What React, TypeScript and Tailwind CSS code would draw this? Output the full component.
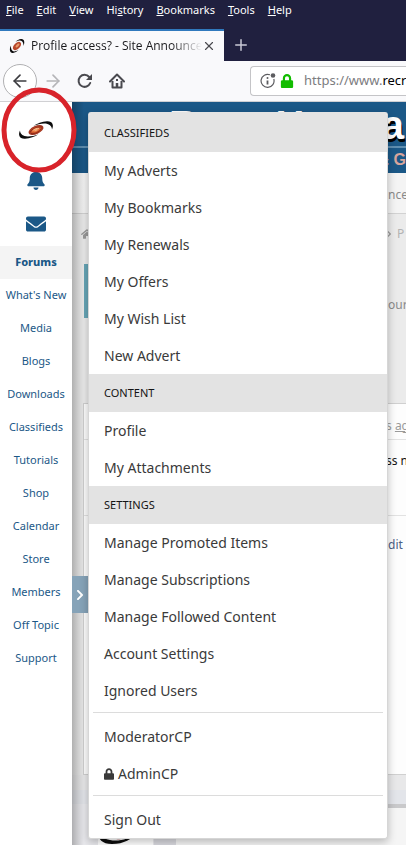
import * as React from "react"
import { ArrowLeft, ArrowRight, Plus, X } from "lucide-react"
import { FaBell, FaChevronRight, FaEnvelope, FaHome, FaLock } from "react-icons/fa"
import { clsx } from "clsx"

const browserMenus = [
  { pre: "", key: "F", post: "ile" },
  { pre: "", key: "E", post: "dit" },
  { pre: "", key: "V", post: "iew" },
  { pre: "Hi", key: "s", post: "tory" },
  { pre: "", key: "B", post: "ookmarks" },
  { pre: "", key: "T", post: "ools" },
  { pre: "", key: "H", post: "elp" },
]

const sideLinks = [
  "Forums", "What's New", "Media", "Blogs", "Downloads", "Classifieds", "Tutorials",
  "Shop", "Calendar", "Store", "Members", "Off Topic", "Support",
]

const menuSections = [
  {
    title: "CLASSIFIEDS",
    items: ["My Adverts", "My Bookmarks", "My Renewals", "My Offers", "My Wish List", "New Advert"],
  },
  { title: "CONTENT", items: ["Profile", "My Attachments"] },
  {
    title: "SETTINGS",
    items: [
      "Manage Promoted Items",
      "Manage Subscriptions",
      "Manage Followed Content",
      "Account Settings",
      "Ignored Users",
    ],
  },
]

function GalaxyLogo({ className }: { className?: string }) {
  return (
    <svg viewBox="0 0 36 20" className={className} aria-hidden="true">
      <defs>
        <radialGradient id="core">
          <stop offset="0" stopColor="#f9c48c" />
          <stop offset="0.4" stopColor="#e0662f" />
          <stop offset="1" stopColor="#96291a" />
        </radialGradient>
      </defs>
      <path d="M2 10.500C0 14.500 1 19 7 18.800C12 18.500 17 16.500 20.500 14.200C16 16 10 17.200 6.500 16C3 14.800 2 12.500 2 10.500Z" fill="#0c0c0c" />
      <path d="M34 9.500C36 5.500 35 1 29 1.200C24 1.500 19 3.500 15.500 5.800C20 4 26 2.800 29.500 4C33 5.200 34 7.500 34 9.500Z" fill="#0c0c0c" />
      <ellipse cx="18" cy="10" rx="8" ry="4" transform="rotate(-24 18 10)" fill="url(#core)" />
      <path d="M12 12.500C14 8.500 19 6.500 24 7M13 13.500C17 14 21 12 23.500 8.500" stroke="#7d2015" strokeWidth="0.7" fill="none" />
      <path d="M14.500 11C16 9 19 8 21 8.500" stroke="#ffd9a8" strokeWidth="0.7" fill="none" />
    </svg>
  )
}

// upright version used for the tab favicon
function Favicon() {
  return (
    <svg viewBox="0 0 16 16" className="h-4 w-4 shrink-0" aria-hidden="true">
      <path d="M2 7.500C0 11 .8 15.500 4 15C6 14.700 8 13.500 9.500 12C7 13.400 4.500 14 3.200 12.500C2 11.200 1.800 9 2 7.500Z" fill="#0c0c0c" />
      <path d="M14.500 8C16 4.500 15.500 .6 12 1C10 1.200 8 2.300 6.500 4C9 2.600 11.500 2 13 3.300C14.200 4.500 14.600 6.500 14.500 8Z" fill="#0c0c0c" />
      <ellipse cx="8" cy="8" rx="5" ry="3" transform="rotate(-45 8 8)" fill="#b8482b" />
      <ellipse cx="8.500" cy="7.500" rx="2.500" ry="1.200" transform="rotate(-45 8.500 7.500)" fill="#e89a6c" />
    </svg>
  )
}

function ReloadIcon() {
  return (
    <svg viewBox="0 0 16 16" className="h-4 w-4" fill="none" stroke="#4a4a4f" strokeWidth="2">
      <path d="M13.200 10A6 6 0 1 1 12.200 4" strokeLinecap="round" />
      <path d="M15 1V7H9Z" fill="#4a4a4f" stroke="none" />
    </svg>
  )
}

function HomeIcon() {
  return (
    <svg viewBox="0 0 16 16" className="h-4 w-4" fill="none" stroke="#4a4a4f" strokeWidth="2">
      <path d="M1 8.500L8 1.500L15 8.500" strokeLinecap="round" strokeLinejoin="round" />
      <path d="M3.500 8V14.500H12.500V8" strokeLinejoin="round" />
      <path d="M8 14.500V10" strokeWidth="2.500" />
      <path d="M8 6V8" />
    </svg>
  )
}

function InfoIcon() {
  return (
    <svg viewBox="0 0 16 16" className="h-4 w-4 shrink-0" fill="none" stroke="#5c5c60">
      <path d="M10 1.800A6.500 6.500 0 1 0 13.800 6" strokeWidth="1.200" />
      <circle cx="13" cy="2.500" r="2.300" fill="#5c5c60" stroke="none" />
      <path d="M7.500 7.500V11.500" strokeWidth="1.800" />
      <circle cx="7.500" cy="5" r="1" fill="#5c5c60" stroke="none" />
    </svg>
  )
}

function BrowserChrome() {
  return (
    <header className="shrink-0">
      <div className="flex h-[29px] gap-[13px] bg-[#20203f] px-[6px] text-[11px] leading-5 text-white">
        {browserMenus.map((m) => (
          <button key={m.key + m.post} className="h-5">
            {m.pre}
            <span className="underline">{m.key}</span>
            {m.post}
          </button>
        ))}
      </div>

      <div className="flex h-8 items-stretch bg-[#20203f]">
        <div className="flex w-[224px] items-center border-t-2 border-[#3079bd] bg-[#f9f9fb] pl-[9px] pr-[10px]">
          <Favicon />
          <span className="ml-[6px] flex-1 whitespace-nowrap font-['Open_Sans',sans-serif] text-[12px] text-[#18181b] [mask-image:linear-gradient(to_right,black_82%,transparent)]">
            Profile access? - Site Announce
          </span>
          <button aria-label="Close tab">
            <X className="h-[14px] w-[14px] text-[#4a4a4f]" />
          </button>
        </div>
        <button aria-label="New tab" className="ml-2">
          <Plus className="h-[18px] w-[18px] text-[#c9c9d6]" />
        </button>
      </div>

      <div className="flex h-[41px] items-center border-b border-[#d0d0d3] bg-[#f9f9fb] pl-[3px]">
        <button aria-label="Back" className="flex h-[34px] w-[34px] shrink-0 items-center justify-center rounded-full border border-[#b1b1b3] bg-white">
          <ArrowLeft className="h-5 w-5 text-[#3c3c40]" />
        </button>
        <button aria-label="Forward" className="ml-[6px]">
          <ArrowRight className="h-5 w-5 text-[#b5b5b8]" />
        </button>
        <button aria-label="Reload" className="ml-[14px]">
          <ReloadIcon />
        </button>
        <button aria-label="Home" className="ml-4">
          <HomeIcon />
        </button>
        <div className="ml-[125px] flex h-[30px] min-w-0 flex-1 items-center overflow-hidden rounded-l-sm border border-r-0 border-[#c4c4c7] bg-white pl-[9px]">
          <InfoIcon />
          <FaLock className="ml-1 h-[14px] w-[14px] shrink-0 text-[#12bc00]" />
          <label htmlFor="url" className="ml-[10px] text-[13px] text-[#7c7c80]">
            https://www.
          </label>
          <input id="url" defaultValue="recr" className="min-w-0 flex-1 bg-transparent text-[13px] text-black outline-none" />
        </div>
      </div>
    </header>
  )
}

function Sidebar() {
  return (
    <aside className="relative z-20 w-[72px] shrink-0 bg-white text-[#1b5887]">
      <a href="#home" aria-label="Home" className="flex h-14 items-center justify-center">
        <GalaxyLogo className="h-5 w-9" />
      </a>
      <a href="#alerts" aria-label="Alerts" className="flex h-[44px] items-center justify-center">
        <FaBell className="h-5 w-5" />
      </a>
      <a href="#inbox" aria-label="Inbox" className="flex h-11 items-center justify-center">
        <FaEnvelope className="h-5 w-5" />
      </a>
      <nav>
        {sideLinks.map((link, i) => (
          <a
            key={link}
            href="#"
            className={clsx(
              "flex h-[33px] items-center justify-center whitespace-nowrap text-[11px]",
              i === 0 && "bg-[#f4f4f4] font-extrabold"
            )}
          >
            {link}
          </a>
        ))}
      </nav>
      {/* hand-drawn marker around the account avatar */}
      <svg viewBox="0 0 78 88" className="absolute left-0 -top-4 h-[88px] w-[78px] max-w-none" fill="none">
        <ellipse cx="39" cy="44" rx="35" ry="40" stroke="#d8232a" strokeWidth="5" />
      </svg>
    </aside>
  )
}

function ForumPage() {
  return (
    <div className="flex h-full flex-col whitespace-nowrap text-[#8a8a8a]">
      <div className="h-[71px] shrink-0 bg-[#1b5887]">
        <div className="flex h-[46px] justify-between border-b-2 border-[#5f8eb0] pl-[97px] pr-[2px] font-['Liberation_Sans',sans-serif] text-[40px] leading-[46px] font-bold text-white [text-shadow:1px_3px_0_#000]">
          <span>R</span>
          <span>H</span>
          <span>a</span>
        </div>
        <div className="flex justify-end gap-1 font-['Liberation_Sans',sans-serif] text-[16px] leading-6 font-bold text-[#d8a59c]">
          <span className="italic">&amp;</span>
          <span>G</span>
        </div>
      </div>
      <div className="flex h-[41px] shrink-0 items-center border-b border-[#d2d2d2] bg-[#f4f4f4] pt-1 pl-[316px] text-[12px]">
        nce
      </div>
      <div className="flex h-10 shrink-0 items-center pl-[9px] text-[12px] text-[#b3b3b3]">
        <FaHome className="h-3 w-3 shrink-0 text-[#999]" />
        <FaChevronRight className="ml-[292px] h-2 w-2 shrink-0 text-[#999]" />
        <span className="ml-1">P</span>
      </div>
      <div className="mt-[10px] ml-3 flex h-[54px] shrink-0 items-end border-l-4 border-[#67a5b6] pb-1 pl-[300px] text-[12px] leading-[18px]">
        our
      </div>
      <div className="mt-[85px] ml-[11px] shrink-0 border-t border-b border-l border-[#d0d0d0] bg-[#fdfdfd] text-[12px]">
        <div className="flex h-9 items-center border-b border-[#e2e2e2] pt-2 pl-[302px] text-[#9a9a9a]">
          s&nbsp;<span className="underline">ag</span>
        </div>
        <div className="h-[76px] border-b border-[#e2e2e2] pt-3 pl-[302px] leading-[18px] text-[#141414]">
          ss n
        </div>
        <div className="h-[258px] pt-5 pl-[304px] leading-[18px] text-[#4c5f85]">dit</div>
      </div>
      <div className="h-[15px] shrink-0 bg-[#e8e8e9]" />
      <div className="h-[14px] shrink-0 bg-[#e3e5ea]" />
      <div className="flex min-h-0 flex-1 overflow-hidden bg-[#f5f5f5]">
        <div className="flex w-[104px] items-start border-r-[22px] border-[#d9d9df] bg-[#e9e9ed] pt-[21px]">
          {/* top of the poster's avatar */}
          <svg viewBox="0 0 55 20" className="ml-[26px] h-5 w-[55px] shrink-0 bg-white" aria-hidden="true">
            <path d="M0 8C0 14 4 19 14 19C26 19 34 14 39 8C32 14 20 17 12 15C6 14 3 11 3 6Z" fill="#0c0c0c" />
            <ellipse cx="22" cy="9" rx="9" ry="5" transform="rotate(-12 22 9)" fill="#a3262a" />
          </svg>
        </div>
        <div className="flex-1 border-t-4 border-[#c9c9cb]" />
      </div>
    </div>
  )
}

function MenuLink({ children }: { children: React.ReactNode }) {
  return (
    <a href="#" className="flex h-[37px] items-center gap-1 px-[15px] text-[14px] text-[#3a3a3a]">
      {children}
    </a>
  )
}

function AccountMenu() {
  return (
    <div className="absolute top-[10px] left-4 z-10 w-[300px] overflow-hidden rounded-[3px] border border-t-2 border-[#d6d6d6] border-t-[#e3e3e3] bg-white shadow-[0_3px_8px_rgba(0,0,0,0.25)]">
      {menuSections.map((section) => (
        <section key={section.title}>
          <h3 className="flex h-[38px] items-center bg-[#e3e3e3] px-[15px] text-[11px] text-[#141414]">{section.title}</h3>
          {section.items.map((item) => (
            <MenuLink key={item}>{item}</MenuLink>
          ))}
        </section>
      ))}
      <hr className="mx-1 mt-[3px] mb-[5px] border-[#dcdcdc]" />
      <MenuLink>ModeratorCP</MenuLink>
      <MenuLink>
        <FaLock className="h-3 w-[10px]" />
        AdminCP
      </MenuLink>
      <hr className="mx-1 mt-[3px] mb-[5px] border-[#dcdcdc]" />
      <MenuLink>Sign Out</MenuLink>
    </div>
  )
}

export default function App() {
  return (
    <div className="flex h-screen flex-col overflow-hidden bg-white font-['Noto_Sans','Open_Sans',sans-serif]">
      <BrowserChrome />
      <div className="flex min-h-0 flex-1">
        <Sidebar />
        <main className="relative min-w-0 flex-1 bg-[#ebebeb]">
          <div className="h-full overflow-hidden">
            <ForumPage />
          </div>
          <div className="absolute inset-y-0 left-0 w-3 bg-linear-to-r from-black/25 to-transparent" />
          <button
            aria-label="Expand sidebar"
            className="absolute top-[474px] left-0 flex h-[37px] w-4 items-center justify-center bg-[#86a3b8]"
          >
            <FaChevronRight className="h-3 w-3 text-white" />
          </button>
          <AccountMenu />
        </main>
      </div>
    </div>
  )
}
